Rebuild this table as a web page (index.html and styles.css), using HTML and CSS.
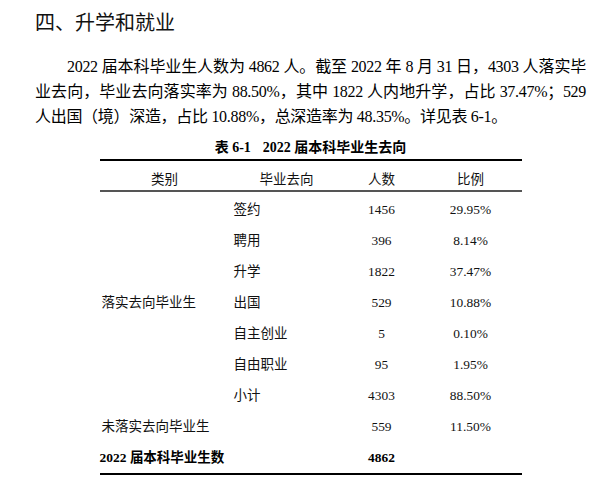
FILE: index.html
```html
<!DOCTYPE html>
<html lang="zh-CN">
<head>
<meta charset="utf-8">
<link rel="stylesheet" href="styles.css">
</head>
<body>
<div class="page">
  <h2 class="heading">四、升学和就业</h2>
  <p class="para">2022 届本科毕业生人数为 4862 人。截至 2022 年 8 月 31 日，4303 人落实毕业去向，毕业去向落实率为 88.50%，其中 1822 人内地升学，占比 37.47%；529 人出国（境）深造，占比 10.88%，总深造率为 48.35%。详见表 6-1。</p>
  <div class="caption"><span class="cap-no">表 6-1</span>2022 届本科毕业生去向</div>
  <table class="tbl">
    <colgroup>
      <col class="c1"><col class="c2"><col class="c3"><col class="c4">
    </colgroup>
    <thead>
      <tr><th>类别</th><th>毕业去向</th><th>人数</th><th>比例</th></tr>
    </thead>
    <tbody>
      <tr class="first"><td class="cat" rowspan="7">落实去向毕业生</td><td class="dest">签约</td><td class="num">1456</td><td class="num">29.95%</td></tr>
      <tr><td class="dest">聘用</td><td class="num">396</td><td class="num">8.14%</td></tr>
      <tr><td class="dest">升学</td><td class="num">1822</td><td class="num">37.47%</td></tr>
      <tr><td class="dest">出国</td><td class="num">529</td><td class="num">10.88%</td></tr>
      <tr><td class="dest">自主创业</td><td class="num">5</td><td class="num">0.10%</td></tr>
      <tr><td class="dest">自由职业</td><td class="num">95</td><td class="num">1.95%</td></tr>
      <tr><td class="dest">小计</td><td class="num">4303</td><td class="num">88.50%</td></tr>
      <tr><td class="cat" colspan="2">未落实去向毕业生</td><td class="num">559</td><td class="num">11.50%</td></tr>
      <tr class="total"><td class="cat" colspan="2">2022 届本科毕业生数</td><td class="num">4862</td><td class="num"></td></tr>
    </tbody>
  </table>
</div>
</body>
</html>
```

FILE: styles.css
```css
html, body {
  margin: 0;
  padding: 0;
  background: #fff;
}

body {
  font-family: "Liberation Serif", "Noto Sans CJK SC", serif;
  color: #000;
}

.page {
  width: 551px;
  padding-left: 35px;
  padding-top: 8px;
}

.heading {
  margin: 0;
  font-family: "Noto Sans CJK SC", sans-serif;
  font-weight: 400;
  font-size: 20px;
  line-height: 28px;
  color: #111;
}

.para {
  margin: 18px 0 0 0;
  font-size: 16px;
  line-height: 25px;
  text-indent: 32px;
  text-align: justify;
  letter-spacing: -0.3px;
}

.caption {
  margin-top: 9px;
  height: 21px;
  line-height: 20px;
  text-align: center;
  font-weight: 700;
  font-size: 14px;
}

.cap-no {
  margin-right: 12px;
}

.tbl {
  width: 422px;
  margin: 0 auto;
  border-collapse: collapse;
  table-layout: fixed;
  font-size: 13.5px;
  color: #111;
  border-top: 2px solid #000;
  border-bottom: 2px solid #000;
}

.c1 { width: 130px; }
.c2 { width: 114px; }
.c3 { width: 76px; }
.c4 { width: 102px; }

.tbl th {
  font-weight: 400;
  text-align: center;
  padding: 9px 0 0 0;
  height: 20px;
  line-height: 20px;
  border-bottom: 2px solid #555;
}

.tbl td {
  padding: 0;
  height: 31px;
  line-height: 31px;
  white-space: nowrap;
}

.tbl tr.first td {
  padding-top: 2px;
}

.tbl td.cat {
  padding-left: 2px;
  text-align: left;
}

.tbl td.dest {
  padding-left: 4px;
  text-align: left;
}

.tbl td.num {
  text-align: center;
  font-size: 13.4px;
}

.tbl tr.total td {
  font-weight: 700;
  color: #000;
}

.tbl tr.total td.cat {
  padding-left: 0;
}
```
